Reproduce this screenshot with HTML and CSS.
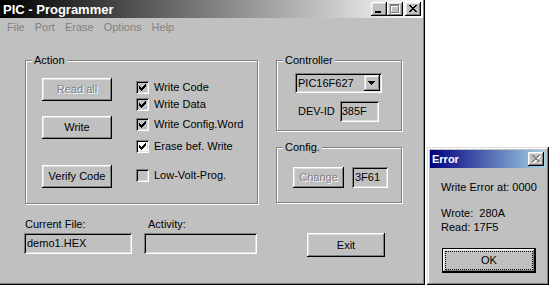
FILE: index.html
```html
<!DOCTYPE html>
<html>
<head>
<meta charset="UTF-8">
<title>PIC - Programmer</title>
<link rel="stylesheet" href="styles.css">
</head>
<body>
<div class="main">
	<div class="titlebar grey">
		<span class="title big">PIC - Programmer</span>
		<div class="caption">
			<span class="cbtn"><svg width="16" height="14"><rect x="4" y="9" width="6" height="2" fill="#000"/></svg></span>
			<span class="cbtn"><svg width="16" height="14"><path d="M4 3h9v9H4z M5 5h7v6H5z" fill-rule="evenodd" fill="#fff"/><path d="M3 2h9v9H3z M4 4h7v6H4z" fill-rule="evenodd" fill="#808080"/></svg></span>
			<span class="cbtn close"><svg width="16" height="14"><path d="M4 3h2v1h-2z M10 3h2v1h-2z M5 4h2v1h-2z M9 4h2v1h-2z M6 5h4v1h-4z M7 6h2v1h-2z M6 7h4v1h-4z M5 8h2v1h-2z M9 8h2v1h-2z M4 9h2v1h-2z M10 9h2v1h-2z" fill="#000"/></svg></span>
		</div>
	</div>
	<div class="menubar">
		<span>File</span>
		<span>Port</span>
		<span>Erase</span>
		<span>Options</span>
		<span>Help</span>
	</div>
	<div class="client">
		<div class="groups">
			<div class="group action">
				<span class="group-label">Action</span>
				<div class="btn-col">
					<div class="btn off">Read all</div>
					<div class="btn">Write</div>
					<div class="btn">Verify Code</div>
				</div>
				<div class="check-col">
					<div class="check"><span class="box"><svg width="13" height="13"><path d="M9 3h1v1h-1z M8 4h2v1h-2z M3 5h1v1h-1z M7 5h3v1h-3z M3 6h2v1h-2z M6 6h3v1h-3z M3 7h5v1h-5z M4 8h3v1h-3z M5 9h1v1h-1z" fill="#000"/></svg></span>Write Code</div>
					<div class="check"><span class="box"><svg width="13" height="13"><path d="M9 3h1v1h-1z M8 4h2v1h-2z M3 5h1v1h-1z M7 5h3v1h-3z M3 6h2v1h-2z M6 6h3v1h-3z M3 7h5v1h-5z M4 8h3v1h-3z M5 9h1v1h-1z" fill="#000"/></svg></span>Write Data</div>
					<div class="check"><span class="box"><svg width="13" height="13"><path d="M9 3h1v1h-1z M8 4h2v1h-2z M3 5h1v1h-1z M7 5h3v1h-3z M3 6h2v1h-2z M6 6h3v1h-3z M3 7h5v1h-5z M4 8h3v1h-3z M5 9h1v1h-1z" fill="#000"/></svg></span>Write Config.Word</div>
					<div class="check"><span class="box white"><svg width="13" height="13"><path d="M9 3h1v1h-1z M8 4h2v1h-2z M3 5h1v1h-1z M7 5h3v1h-3z M3 6h2v1h-2z M6 6h3v1h-3z M3 7h5v1h-5z M4 8h3v1h-3z M5 9h1v1h-1z" fill="#000"/></svg></span>Erase bef. Write</div>
					<div class="check"><span class="box"></span>Low-Volt-Prog.</div>
				</div>
			</div>
			<div class="right-col">
				<div class="group controller">
					<span class="group-label">Controller</span>
					<div class="combo">
						<span class="combo-text">PIC16F627</span>
						<span class="drop"><svg width="16" height="16"><path d="M4 6h7v1h-7z M5 7h5v1h-5z M6 8h3v1h-3z M7 9h1v1h-1z" fill="#000"/></svg></span>
					</div>
					<div class="devid">
						<span>DEV-ID</span>
						<div class="edit devid-edit">385F</div>
					</div>
				</div>
				<div class="group config">
					<span class="group-label">Config.</span>
					<div class="btn off change">Change</div>
					<div class="edit config-edit">3F61</div>
				</div>
			</div>
		</div>
		<div class="bottom">
			<div class="field file">
				<div class="field-label">Current File:</div>
				<div class="edit">demo1.HEX</div>
			</div>
			<div class="field activity">
				<div class="field-label">Activity:</div>
				<div class="edit"></div>
			</div>
			<div class="btn exit">Exit</div>
		</div>
	</div>
</div>

<div class="dialog">
	<div class="titlebar blue">
		<span class="title">Error</span>
		<span class="cbtn"><svg width="16" height="14"><path d="M5 4h2v1h-2z M11 4h2v1h-2z M6 5h2v1h-2z M10 5h2v1h-2z M7 6h4v1h-4z M8 7h2v1h-2z M7 8h4v1h-4z M6 9h2v1h-2z M10 9h2v1h-2z M5 10h2v1h-2z M11 10h2v1h-2z" fill="#fff"/><path d="M4 3h2v1h-2z M10 3h2v1h-2z M5 4h2v1h-2z M9 4h2v1h-2z M6 5h4v1h-4z M7 6h2v1h-2z M6 7h4v1h-4z M5 8h2v1h-2z M9 8h2v1h-2z M4 9h2v1h-2z M10 9h2v1h-2z" fill="#808080"/></svg></span>
	</div>
	<div class="dialog-body">
		<p class="msg">Write Error at: 0000</p>
		<p class="msg">Wrote:&nbsp; 280A<br>Read: 17F5</p>
		<div class="btn default"><span class="focus">OK</span></div>
	</div>
</div>
</body>
</html>
```

FILE: styles.css
```css
body{
	margin: 0;
	width: 549px;
	height: 285px;
	overflow: hidden;
	position: relative;
	background: #fff;
	font-family: "Liberation Sans", Arial, sans-serif;
	font-size: 11px;
	line-height: 13px;
	color: #000;
}

/* windows */
.main{
	position: absolute;
	left: 0;
	top: 0;
	width: 425px;
	height: 285px;
	box-sizing: border-box;
	padding: 0 2px 2px 0;
	background: #c0c0c0;
	box-shadow: inset -1px -1px #000, inset -2px -2px #808080;
}
.dialog{
	position: absolute;
	left: 427px;
	top: 147px;
	width: 122px;
	height: 138px;
	box-sizing: border-box;
	padding: 3px;
	background: #c0c0c0;
	box-shadow: inset -1px -1px #000, inset 1px 1px #dfdfdf, inset -2px -2px #808080, inset 2px 2px #fff;
}

.titlebar{
	height: 18px;
	display: flex;
	align-items: center;
	padding: 0 2px 0 3px;
}
.titlebar.grey{
	background: linear-gradient(to right, #000, #fff);
}
.titlebar.blue{
	background: linear-gradient(to right, #000080, #a6d4e8);
	padding-left: 2px;
}
.title{
	color: #fff;
	font-weight: bold;
	font-size: 11px;
}
.title.big{
	font-size: 13px;
}
.caption{
	margin-left: auto;
	display: flex;
}
.cbtn{
	width: 16px;
	height: 14px;
	margin-left: auto;
	background: #c0c0c0;
	box-shadow: inset -1px -1px #000, inset 1px 1px #fff, inset -2px -2px #808080, inset 2px 2px #dfdfdf;
}
.cbtn svg{
	display: block;
}
.caption .cbtn{
	margin-left: 0;
}
.caption .close{
	margin-left: 2px;
}

.menubar{
	height: 19px;
	display: flex;
	align-items: center;
	gap: 10px;
	padding-left: 7px;
	color: #808080;
}

/* layout of the main client area */
.groups{
	display: grid;
	grid-template-columns: 233px 126px;
	column-gap: 18px;
	padding: 23px 0 0 25px;
}
.group{
	position: relative;
	box-sizing: border-box;
	border: 1px solid #808080;
	box-shadow: inset 1px 1px #fff, 1px 1px #fff;
}
.group-label{
	position: absolute;
	top: -7px;
	left: 6px;
	padding: 0 2px;
	background: #c0c0c0;
}

.action{
	height: 144px;
	display: flex;
	padding: 17px 0 0 16px;
}
.btn-col{
	display: grid;
	grid-template-rows: 38px 49px 23px;
	width: 70px;
}
.check-col{
	display: grid;
	grid-template-rows: 17px 20px 22px 29px 13px;
	margin: 3px 0 0 24px;
}
.check{
	display: flex;
	align-items: flex-start;
	gap: 5px;
	white-space: nowrap;
}
.box{
	width: 13px;
	height: 13px;
	flex: none;
	background: #c0c0c0;
	box-shadow: inset 1px 1px #808080, inset -1px -1px #fff, inset 2px 2px #000, inset -2px -2px #dfdfdf;
}
.box.white{
	background: #fff;
}
.box svg{
	display: block;
}

.right-col{
	display: flex;
	flex-direction: column;
	gap: 16px;
}
.controller{
	height: 71px;
	padding: 12px 0 0 18px;
}
.config{
	height: 56px;
	display: flex;
	align-items: flex-start;
	gap: 8px;
	padding: 19px 0 0 16px;
}

/* controls */
.btn{
	height: 23px;
	box-sizing: border-box;
	display: flex;
	align-items: center;
	justify-content: center;
	background: #c0c0c0;
	box-shadow: inset -1px -1px #000, inset 1px 1px #fff, inset -2px -2px #808080, inset 2px 2px #dfdfdf;
	white-space: nowrap;
}
.btn.off{
	color: #808080;
	text-shadow: 1px 1px #fff;
}
.edit{
	height: 21px;
	box-sizing: border-box;
	display: flex;
	align-items: center;
	padding: 0 2px 0 3px;
	background: #c0c0c0;
	box-shadow: inset 1px 1px #808080, inset -1px -1px #fff, inset 2px 2px #000, inset -2px -2px #dfdfdf;
}

.combo{
	width: 87px;
	height: 20px;
	box-sizing: border-box;
	display: flex;
	align-items: center;
	padding: 2px;
	background: #c0c0c0;
	box-shadow: inset 1px 1px #808080, inset -1px -1px #fff, inset 2px 2px #000, inset -2px -2px #dfdfdf;
}
.combo-text{
	padding-left: 1px;
}
.drop{
	margin-left: auto;
	width: 16px;
	height: 16px;
	background: #c0c0c0;
	box-shadow: inset -1px -1px #000, inset 1px 1px #dfdfdf, inset -2px -2px #808080, inset 2px 2px #fff;
}
.drop svg{
	display: block;
}
.devid{
	display: flex;
	align-items: center;
	gap: 5px;
	margin: 8px 0 0 3px;
}
.devid-edit{
	width: 39px;
	padding-left: 2px;
}
.change{
	width: 51px;
	height: 21px;
}
.config-edit{
	width: 36px;
}

.bottom{
	display: flex;
	align-items: flex-start;
	padding: 14px 0 0 24px;
}
.field-label{
	margin-bottom: 2px;
}
.file{
	width: 108px;
}
.file .field-label{
	padding-left: 1px;
}
.activity{
	width: 113px;
	margin-left: 12px;
}
.activity .field-label{
	padding-left: 4px;
}
.exit{
	width: 78px;
	height: 24px;
	margin: 15px 0 0 50px;
}

/* error dialog */
.dialog-body{
	padding: 12px 0 0 11px;
}
.msg{
	margin: 0 0 12px 0;
	line-height: 14px;
	white-space: nowrap;
}
.default{
	width: 94px;
	height: 25px;
	margin: 14px 0 0 1px;
	position: relative;
	box-shadow: inset 0 0 0 1px #000, inset -2px -2px #000, inset 2px 2px #fff, inset -3px -3px #808080, inset 3px 3px #dfdfdf;
}
.focus{
	position: absolute;
	left: 4px;
	top: 4px;
	right: 4px;
	bottom: 4px;
	display: flex;
	align-items: center;
	justify-content: center;
	outline: 1px dotted #000;
}
```
